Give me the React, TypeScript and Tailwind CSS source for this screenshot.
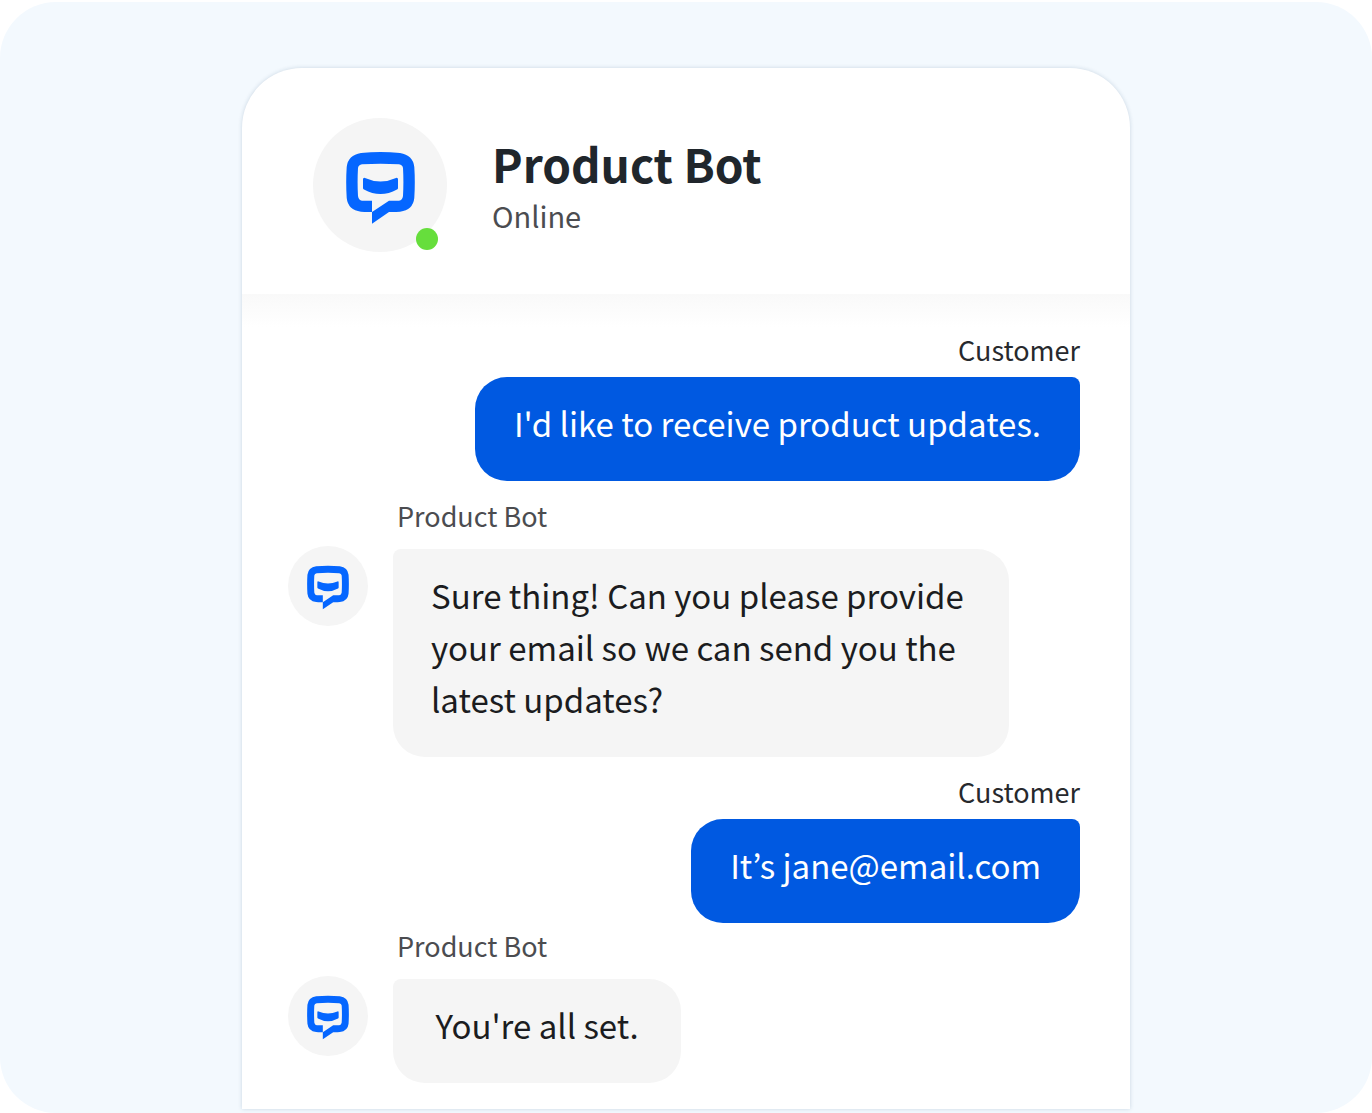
type Message = {
  id: number;
  from: "bot" | "customer";
  text: string;
  compact?: boolean;
};

const messages: Message[] = [
  { id: 1, from: "customer", text: "I'd like to receive product updates." },
  {
    id: 2,
    from: "bot",
    text: "Sure thing! Can you please provide your email so we can send you the latest updates?",
  },
  { id: 3, from: "customer", text: "It’s jane@email.com" },
  { id: 4, from: "bot", text: "You're all set.", compact: true },
];

function BotLogo({ className }: { className: string }) {
  return (
    <svg viewBox="0 -6 69 78" className={className} aria-hidden="true">
      <path
        fillRule="evenodd"
        fill="#0566ff"
        d="M15 1Q34.5 -1 54 1Q67 3 68.3 15Q69.3 30 68.3 46Q67 58 54 59.7Q48 60.3 43 60L26 71.7V60Q20 60.3 15 59.7Q2 58 0.7 46Q-0.3 30 0.7 15Q2 3 15 1ZM16 12.3Q34.5 11 53 12.3Q56.5 12.8 57 16Q57.8 30 57 44Q56.5 48.2 53 48.7H43L26 60V48.7H16Q12.5 48.2 12 44Q11.2 30 12 16Q12.5 12.8 16 12.3Z"
      />
      <path
        fill="#0566ff"
        d="M17 27.5Q17 25.3 19 26Q34.5 33 50 26Q52 25.3 52 27.5V36Q52 37 51 37.5Q34.5 46.5 18 37.5Q17 37 17 36Z"
      />
    </svg>
  );
}

function CustomerMessage({ text }: { text: string }) {
  return (
    <div className="mb-3 flex flex-col items-end">
      <span className="text-[27px] leading-[46px] text-[#27292d]">Customer</span>
      <p className="mt-1 rounded-[32px] rounded-tr-lg bg-[#0059e1] px-[39px] pt-5 pb-8 text-[33px] leading-[52px] text-white">
        {text}
      </p>
    </div>
  );
}

function BotMessage({ text }: { text: string }) {
  return (
    <div className="mb-3 flex gap-[25px]">
      <div className="mt-[53px] flex size-20 shrink-0 items-center justify-center rounded-full bg-[#f5f5f5]">
        <BotLogo className="w-[42px]" />
      </div>
      <div className="flex max-w-[616px] flex-col items-start">
        <span className="ml-1 text-[27px] leading-[46px] text-[#4b4c50]">Product Bot</span>
        <p className="mt-2.5 flex min-w-72 justify-center rounded-[32px] rounded-tl-lg bg-[#f5f5f5] px-[38px] pt-5 pb-8 text-[33px] leading-[52px] text-[#1b1c20]">
          {text}
        </p>
      </div>
    </div>
  );
}

export default function App() {
  return (
    <main className="mt-0.5 flex min-h-[calc(100vh-2px)] justify-center rounded-[56px] bg-[#f3f9fe] px-6 pt-[66px] pb-1 font-['Noto_Sans_CJK_KR',sans-serif]">
      <section className="w-full max-w-[888px] rounded-t-[60px] bg-white pb-3.5 shadow-[0_0_4px_rgba(20,60,100,0.18)]">
        <header className="flex items-center gap-[45px] px-[71px] pt-[50px] pb-[42px]">
          <div className="relative flex size-[134px] shrink-0 items-center justify-center rounded-full bg-[#f5f5f5]">
            <BotLogo className="w-[69px]" />
            <span className="absolute right-[9px] bottom-0.5 size-[22px] rounded-full bg-[#66de3c]" />
          </div>
          <div>
            <h1 className="text-[46px] leading-[60px] font-bold text-[#20262c]">Product Bot</h1>
            <p className="text-[29px] leading-[44px] text-[#4b4c50]">Online</p>
          </div>
        </header>
        <div className="h-[33px] bg-linear-to-b from-[#f9f9f9] to-white" />
        <div className="pr-[50px] pl-[46px]">
          {messages.map((m) => (
            <div key={m.id} className={m.compact ? "-mt-3" : ""}>
              {m.from === "bot" ? <BotMessage text={m.text} /> : <CustomerMessage text={m.text} />}
            </div>
          ))}
        </div>
      </section>
    </main>
  );
}
